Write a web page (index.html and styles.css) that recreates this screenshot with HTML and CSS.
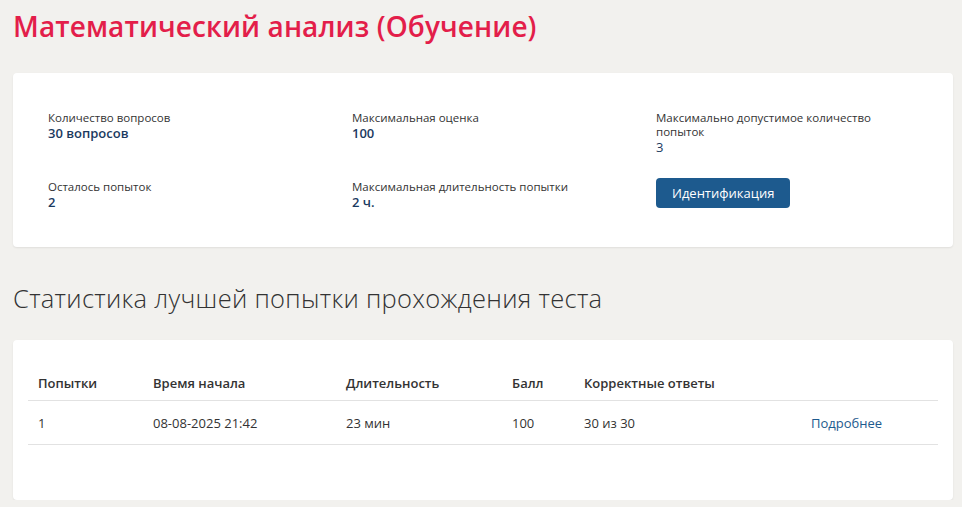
FILE: index.html
```html
<!DOCTYPE html>
<html lang="ru">
<head>
<meta charset="utf-8">
<title>Математический анализ (Обучение)</title>
<link rel="stylesheet" href="styles.css">
</head>
<body>
<div class="page">
  <h1 class="title">Математический анализ (Обучение)</h1>
  <section class="card info">
    <div class="info-grid">
      <div class="item">
        <div class="label">Количество вопросов</div>
        <div class="value bold">30 вопросов</div>
      </div>
      <div class="item">
        <div class="label">Максимальная оценка</div>
        <div class="value bold">100</div>
      </div>
      <div class="item narrow">
        <div class="label">Максимально допустимое количество попыток</div>
        <div class="value">3</div>
      </div>
      <div class="item">
        <div class="label">Осталось попыток</div>
        <div class="value bold">2</div>
      </div>
      <div class="item">
        <div class="label">Максимальная длительность попытки</div>
        <div class="value bold">2 ч.</div>
      </div>
      <div class="item">
        <button class="btn">Идентификация</button>
      </div>
    </div>
  </section>
  <h2 class="subtitle">Статистика лучшей попытки прохождения теста</h2>
  <section class="card stats">
    <table class="table">
      <thead>
        <tr>
          <th class="c1">Попытки</th>
          <th class="c2">Время начала</th>
          <th class="c3">Длительность</th>
          <th class="c4">Балл</th>
          <th class="c5">Корректные ответы</th>
          <th class="c6"></th>
        </tr>
      </thead>
      <tbody>
        <tr>
          <td>1</td>
          <td>08-08-2025 21:42</td>
          <td>23 мин</td>
          <td>100</td>
          <td>30 из 30</td>
          <td><a class="link" href="#">Подробнее</a></td>
        </tr>
      </tbody>
    </table>
  </section>
</div>
</body>
</html>
```
FILE: styles.css
```css
html, body {
  margin: 0;
  padding: 0;
}
body {
  background: #f2f1ee;
  font-family: "Open Sans", "Noto Sans", sans-serif;
  color: #333;
}
.page {
  padding: 0 9px 0 13px;
}
.title {
  margin: 0;
  padding-top: 8px;
  height: 65px;
  font-size: 28px;
  font-weight: 600;
  color: #e31e4a;
  line-height: 36px;
  letter-spacing: 0.1px;
}
.card {
  background: #fff;
  border-radius: 4px;
  box-shadow: 0 1px 2px rgba(0,0,0,0.08);
}
.info {
  padding: 38px 35px 37px 35px;
}
.info-grid {
  display: grid;
  grid-template-columns: 304px 304px 1fr;
  row-gap: 25px;
}
.item.narrow {
  max-width: 230px;
}
.label {
  font-size: 11.5px;
  line-height: 14px;
  color: #333;
}
.value {
  font-size: 13px;
  line-height: 16px;
  color: #1b3a5f;
}
.value.bold {
  font-weight: 600;
}
.btn {
  margin-top: -2px;
  height: 30px;
  padding: 0 16px;
  background: #1d5a8e;
  color: #fff;
  border: none;
  border-radius: 4px;
  font-family: "Open Sans", "Noto Sans", sans-serif;
  font-size: 13px;
  font-weight: 500;
}
.subtitle {
  margin: 0;
  padding-top: 36px;
  height: 57px;
  font-size: 25.5px;
  font-weight: 300;
  line-height: 30px;
  letter-spacing: 0.3px;
  color: #333;
}
.stats {
  padding: 26px 15px 55px 15px;
}
.table {
  width: 100%;
  border-collapse: collapse;
  font-size: 13px;
}
.table th {
  text-align: left;
  font-weight: 600;
  height: 34px;
  padding: 0 10px;
  border-bottom: 1px solid #e2e2e2;
  color: #333;
}
.table td {
  height: 43px;
  padding: 0 10px;
  border-bottom: 1px solid #e2e2e2;
  color: #333;
}
.c1 { width: 95px; }
.c2 { width: 173px; }
.c3 { width: 146px; }
.c4 { width: 52px; }
.c5 { width: 207px; }
.link {
  color: #1d5a8e;
  text-decoration: none;
}
```
